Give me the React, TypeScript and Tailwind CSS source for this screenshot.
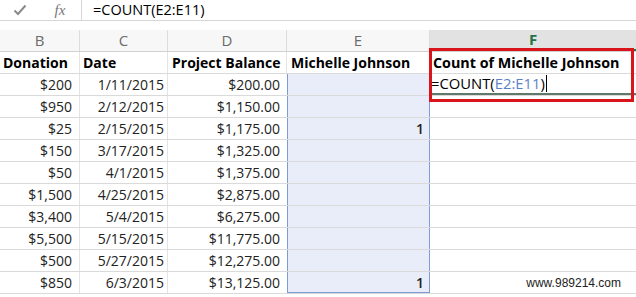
const cols = ["w-[80px]", "w-[88px]", "w-[119px]", "w-[143px]", "w-[206px]"];

const rows = [
  ["$200", "1/11/2015", "$200.00", ""],
  ["$950", "2/12/2015", "$1,150.00", ""],
  ["$25", "2/15/2015", "$1,175.00", "1"],
  ["$150", "3/17/2015", "$1,325.00", ""],
  ["$50", "4/1/2015", "$1,375.00", ""],
  ["$1,500", "4/25/2015", "$2,875.00", ""],
  ["$3,400", "5/4/2015", "$6,275.00", ""],
  ["$5,500", "5/15/2015", "$11,775.00", ""],
  ["$500", "5/27/2015", "$12,275.00", ""],
  ["$850", "6/3/2015", "$13,125.00", "1"],
];

const CheckIcon = () => (
  <svg width="14" height="12" viewBox="0 0 14 12" fill="none">
    <path d="M1.5 6.5 L5 10 L12.5 1.5" stroke="#8a8a8a" strokeWidth="2" />
  </svg>
);

const App = () => {
  return (
    <div
      className="relative h-[297px] w-[636px] overflow-hidden bg-white text-[14px] text-[#222]"
      style={{ fontFamily: "'Open Sans', Lato, sans-serif" }}
    >
      {/* formula bar */}
      <div className="flex h-[21px] border-b border-[#d6d6d6]">
        <div className="flex w-[82px] items-center border-r border-[#d6d6d6]">
          <div className="flex w-[40px] justify-center">
            <CheckIcon />
          </div>
          <div
            className="flex w-[40px] justify-center text-[15px] italic text-[#777]"
            style={{ fontFamily: "'Liberation Serif', serif" }}
          >
            fx
          </div>
        </div>
        <div className="flex items-center pl-[11px] text-[14.5px] text-black">=COUNT(E2:E11)</div>
      </div>

      {/* column letters */}
      <div className="mt-[9px] flex h-[22px] border-b border-[#d0d0d0] bg-[#f7f7f7] text-[15px] text-[#6b6b6b]">
        {["B", "C", "D", "E"].map((c, i) => (
          <div key={c} className={`${cols[i]} flex items-center justify-center border-r border-[#dcdcdc]`}>
            {c}
          </div>
        ))}
        <div className={`${cols[4]} flex items-center justify-center border-b-2 border-[#217346] bg-[#e2e2e2] font-bold text-[#217346]`}>
          F
        </div>
      </div>

      {/* header row */}
      <div className="flex h-[22px] border-b border-[#dadada] font-bold text-black">
        <div className={`${cols[0]} flex items-center border-r border-[#e4e4e4] pl-[3px]`}>Donation</div>
        <div className={`${cols[1]} flex items-center border-r border-[#e4e4e4] pl-[3px]`}>Date</div>
        <div className={`${cols[2]} flex items-center border-r border-[#e4e4e4] pl-[4px]`}>Project Balance</div>
        <div className={`${cols[3]} flex items-center border-r border-[#8ea6d8] pl-[4px]`}>Michelle Johnson</div>
        <div className={`${cols[4]} flex items-center pl-[3px] text-[14.3px]`}>Count of Michelle Johnson</div>
      </div>

      {/* data rows */}
      {rows.map((r, i) => (
        <div key={i} className="flex h-[22px] border-b border-[#dadada]">
          <div className={`${cols[0]} flex items-center justify-end border-r border-[#e4e4e4] pr-[7px]`}>{r[0]}</div>
          <div className={`${cols[1]} flex items-center justify-end border-r border-[#e4e4e4] pr-[3px]`}>{r[1]}</div>
          <div className={`${cols[2]} flex items-center justify-end pr-[7px]`}>{r[2]}</div>
          <div
            className={`${cols[3]} flex items-center justify-end border-x border-[#7f9bd4] bg-[#e9edf9] pr-[5px] font-semibold ${
              i === rows.length - 1 ? "border-b" : ""
            }`}
          >
            {r[3]}
          </div>
          <div className={`${cols[4]} flex items-center`}>
            {i === 0 && (
              <div className="flex h-full w-full items-center border-b-2 border-[#5f7a6a] pl-[1px] text-[14.8px] text-black">
                =COUNT(<span className="text-[#5b82c8]">E2:E11</span>)
                <span className="ml-[1px] h-[17px] w-px bg-black" />
              </div>
            )}
            {i === rows.length - 1 && (
              <div
                className="ml-auto pr-[15px] text-[12px] text-[#222]"
                style={{ fontFamily: "'Liberation Sans', Arial, sans-serif" }}
              >
                www.989214.com
              </div>
            )}
          </div>
        </div>
      ))}

      {/* red annotation box */}
      <div className="absolute left-[429px] top-[48px] h-[54px] w-[205px] border-[3px] border-[#d9141b]" />
    </div>
  );
};

export default App;
